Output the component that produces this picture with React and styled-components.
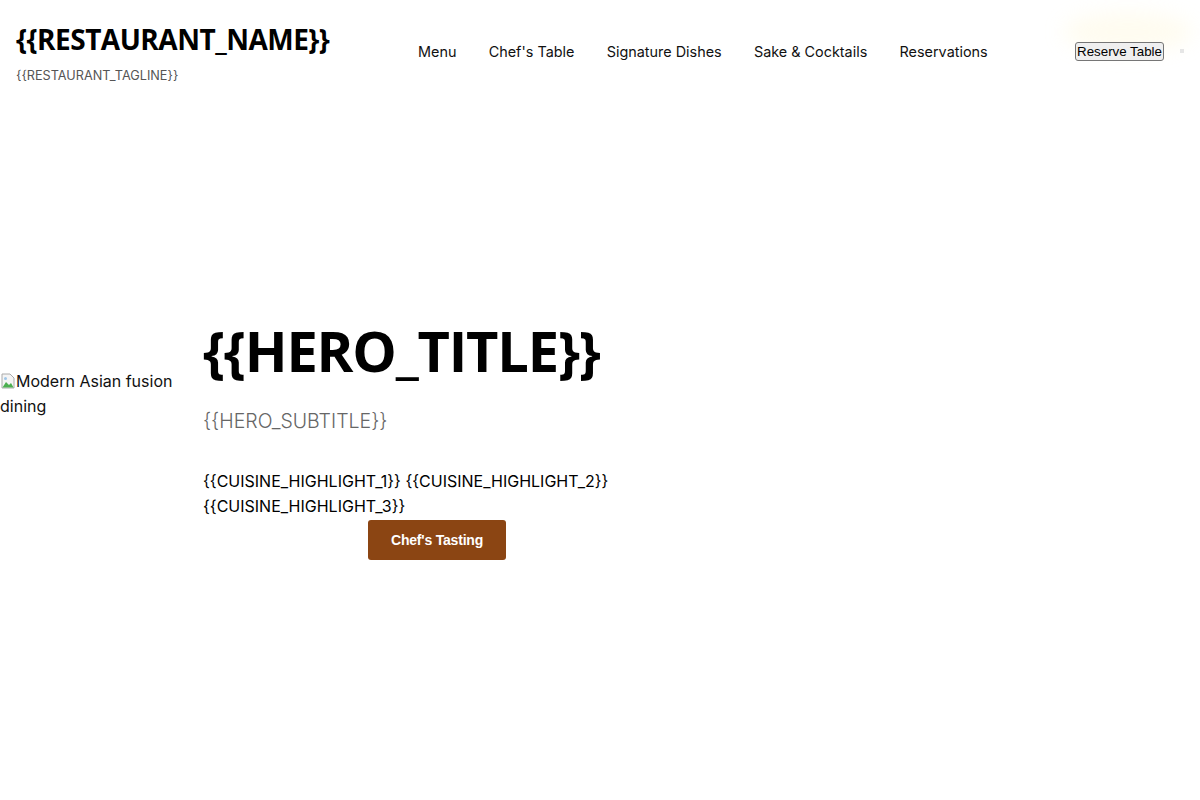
import React from 'react'
import styled, { createGlobalStyle } from 'styled-components'

const Global = createGlobalStyle`
  html, body { margin: 0; padding: 0; background: #fff; }
  body { font-family: Inter, "Liberation Sans", sans-serif; color: #000; }
  * { box-sizing: border-box; }
`

const Header = styled.header`
  position: relative;
  display: flex;
  align-items: flex-start;
  padding: 19px 16px 13px 16px;
`

const Brand = styled.div`
  display: flex;
  flex-direction: column;
  width: 360px;
`

const Name = styled.h1`
  margin: 0;
  font-family: "Open Sans", "Noto Sans", sans-serif;
  font-weight: 700;
  font-size: 28px;
  line-height: 40px;
  letter-spacing: -0.5px;
`

const Tagline = styled.span`
  font-size: 12.7px;
  color: #555;
  line-height: 16px;
  margin-top: 9px;
`

const Nav = styled.nav`
  display: flex;
  gap: 32.3px;
  margin-left: 42px;
  margin-top: 23px;
  line-height: 20px;
`

const NavLink = styled.a`
  font-size: 14.4px;
  color: #111;
  text-decoration: none;
`

const Actions = styled.div`
  position: relative;
  margin-left: auto;
  margin-right: 20px;
  margin-top: 23px;
  display: flex;
  align-items: center;
`

const Glow = styled.div`
  position: absolute;
  left: -12px;
  top: -30px;
  width: 130px;
  height: 40px;
  border-radius: 50%;
  background: rgba(255, 238, 180, 0.2);
  filter: blur(10px);
`

const ReserveButton = styled.button`
  position: relative;
  font-family: Arial, "Liberation Sans", sans-serif;
  font-size: 13.333px;
  padding: 1px 1px;
  border: 1px solid #767676;
  border-radius: 3px;
  background: #efefef;
  color: #000;
`

const Dot = styled.span`
  position: absolute;
  right: -20px;
  top: 7px;
  width: 4px;
  height: 4px;
  background: #e6e6e6;
`

const Hero = styled.section`
  display: flex;
  align-items: flex-start;
  padding-top: 221px;
  min-height: 700px;
`

const ImageAlt = styled.div`
  width: 180px;
  margin-top: 51px;
  font-size: 16px;
  line-height: 25px;
  color: #111;
`

const BrokenIcon = styled.svg`
  width: 16px;
  height: 16px;
  vertical-align: -2px;
`

const Content = styled.div`
  margin-left: 23px;
  width: 420px;
  display: flex;
  flex-direction: column;
`

const Title = styled.h2`
  margin: 0;
  font-family: "Open Sans", "Noto Sans", sans-serif;
  font-weight: 700;
  font-size: 56px;
  line-height: 64px;
  letter-spacing: -1.2px;
  white-space: nowrap;
`

const Subtitle = styled.p`
  margin: 27px 0 0;
  font-size: 19.5px;
  line-height: 24px;
  font-weight: 300;
  color: #666;
`

const Highlights = styled.p`
  margin: 36px 0 0;
  font-size: 16px;
  line-height: 25px;
  width: 420px;
`

const TastingButton = styled.button`
  align-self: flex-start;
  margin: 1px 0 0 165px;
  width: 138px;
  height: 40px;
  border: none;
  border-radius: 3px;
  background: #8b4513;
  color: #fff;
  font-family: Arial, "Liberation Sans", sans-serif;
  font-size: 14px;
  font-weight: 700;
  letter-spacing: -0.2px;
`

const navItems = ['Menu', "Chef's Table", 'Signature Dishes', 'Sake & Cocktails', 'Reservations']

export default function App() {
  return (
    <>
      <Global />
      <Header>
        <Brand>
          <Name>{'{{RESTAURANT_NAME}}'}</Name>
          <Tagline>{'{{RESTAURANT_TAGLINE}}'}</Tagline>
        </Brand>
        <Nav>
          {navItems.map(item => (
            <NavLink key={item}>{item}</NavLink>
          ))}
        </Nav>
        <Actions>
          <Glow />
          <ReserveButton>Reserve Table</ReserveButton>
          <Dot />
        </Actions>
      </Header>
      <Hero>
        <ImageAlt>
          <BrokenIcon viewBox="0 0 16 16">
            <path d="M2 1h8l4 4v10H2z" fill="#f4f4f4" stroke="#aaa" strokeWidth="1" />
            <path d="M2.5 14.5 L6 9 L9 12 L11 10 L13.5 14.5z" fill="#4caf50" />
            <circle cx="5.5" cy="5.5" r="1.5" fill="#9ec6e8" />
          </BrokenIcon>
          Modern Asian fusion dining
        </ImageAlt>
        <Content>
          <Title>{'{{HERO_TITLE}}'}</Title>
          <Subtitle>{'{{HERO_SUBTITLE}}'}</Subtitle>
          <Highlights>
            {'{{CUISINE_HIGHLIGHT_1}} {{CUISINE_HIGHLIGHT_2}} {{CUISINE_HIGHLIGHT_3}}'}
          </Highlights>
          <TastingButton>Chef's Tasting</TastingButton>
        </Content>
      </Hero>
    </>
  )
}
